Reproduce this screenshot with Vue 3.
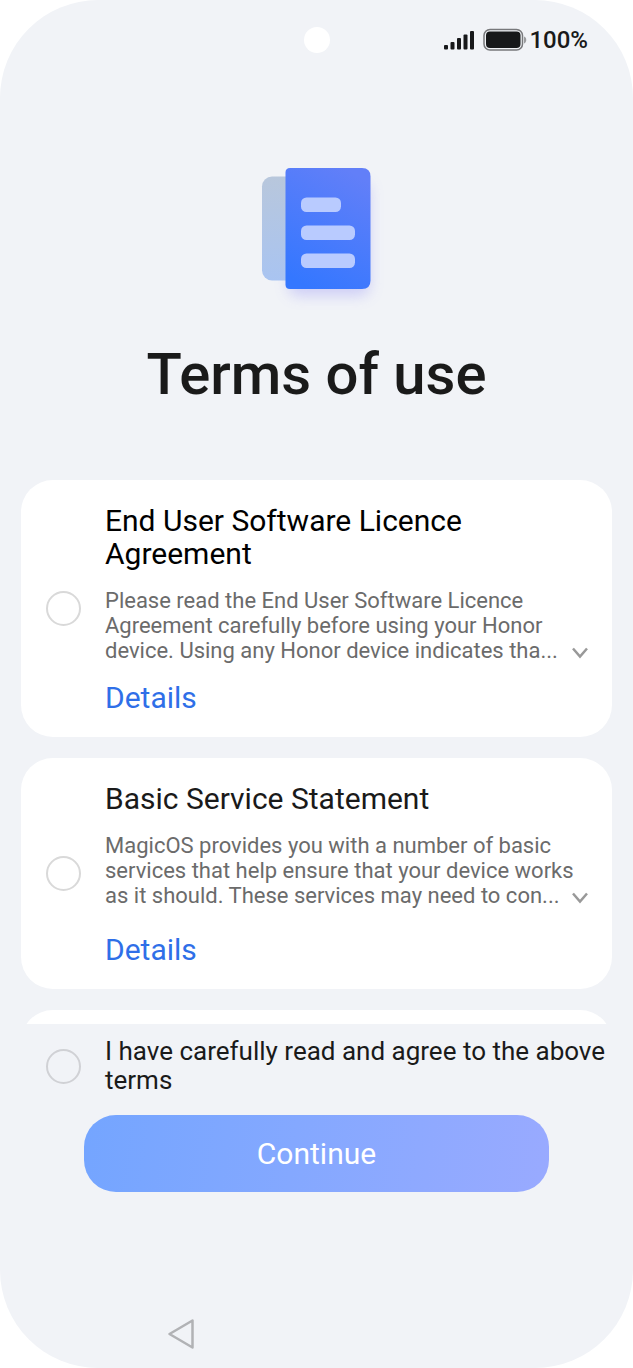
<script setup>
import { ref } from 'vue'

const agreements = ref([
  {
    id: 'licence',
    title: 'End User Software Licence Agreement',
    tone: 'strong',
    lines: [
      'Please read the End User Software Licence',
      'Agreement carefully before using your Honor',
      'device. Using any Honor device indicates tha...',
    ],
    accepted: false,
  },
  {
    id: 'service',
    title: 'Basic Service Statement',
    tone: 'normal',
    lines: [
      'MagicOS provides you with a number of basic',
      'services that help ensure that your device works',
      'as it should. These services may need to con...',
    ],
    accepted: false,
  },
])

const acceptedAll = ref(false)
</script>

<template>
  <div class="screen">
    <header class="status">
      <span class="camera"></span>
      <div class="indicators">
        <svg class="signal" width="31" height="20" viewBox="0 0 31 20" aria-label="Signal">
          <rect x="0" y="15" width="4" height="4.500" rx="1" />
          <rect x="6.500" y="12" width="4" height="7.500" rx="1" />
          <rect x="13" y="8" width="4" height="11.500" rx="1" />
          <rect x="19.500" y="4.500" width="4" height="15" rx="1" />
          <rect x="26" y="1" width="4" height="18.500" rx="1" />
        </svg>
        <svg class="battery" width="44" height="24" viewBox="0 0 44 24" aria-label="Battery">
          <rect x="1" y="1.500" width="38.500" height="20.500" rx="6" fill="none" stroke="#77787b" stroke-width="1.500" />
          <rect x="3" y="3.500" width="34.500" height="16.500" rx="4" fill="#17181a" />
          <path d="M41 8.500c3 .8 3 6 0 7z" fill="#9a9b9e" />
        </svg>
        <span class="percent">100%</span>
      </div>
    </header>

    <main class="content">
      <svg class="emblem" width="150" height="160" viewBox="2 0 150 160" aria-hidden="true">
        <defs>
          <linearGradient id="front" x1="0.700" y1="0" x2="0.300" y2="1">
            <stop offset="0" stop-color="#627ff8" />
            <stop offset="1" stop-color="#3477ff" />
          </linearGradient>
          <linearGradient id="back" x1="0" y1="0" x2="0" y2="1">
            <stop offset="0" stop-color="#b8c7dc" />
            <stop offset="1" stop-color="#a9c4f1" />
          </linearGradient>
          <filter id="glow" x="-30%" y="-30%" width="160%" height="160%">
            <feGaussianBlur stdDeviation="7" />
          </filter>
        </defs>
        <rect x="48" y="32" width="82" height="114" rx="10" fill="#8f8cf5" opacity="0.350" filter="url(#glow)" />
        <path d="M50 26.500H32a10 10 0 0 0-10 10v84a10 10 0 0 0 10 10h18z" fill="url(#back)" />
        <path d="M50 18h72q8.500 0 8.500 8.500V130.500q0 8.500-8.500 8.500H50q-4.500 0-4.500-4.500V22.500Q45.500 18 50 18z" fill="url(#front)" />
        <g fill="#b9cbff">
          <rect x="61" y="47.500" width="40" height="14.500" rx="5.500" />
          <rect x="61" y="75.500" width="54" height="14.500" rx="5.500" />
          <rect x="61" y="103.500" width="54" height="14.500" rx="5.500" />
        </g>
      </svg>
      <h1>Terms of use</h1>

      <section class="cards">
        <article v-for="item in agreements" :key="item.id" class="card">
          <input :id="item.id" v-model="item.accepted" type="checkbox" class="tick" />
          <div class="body">
            <label :for="item.id" class="title" :class="item.tone">{{ item.title }}</label>
            <div class="summary">
              <p><span v-for="line in item.lines" :key="line">{{ line }}</span></p>
              <button type="button" class="expand" aria-label="Show more">
                <svg width="16" height="12" viewBox="0 0 16 12">
                  <path d="M1 1.500L8 9.500l7-8" fill="none" stroke="#999" stroke-width="2.500" />
                </svg>
              </button>
            </div>
            <a href="#" class="details">Details</a>
          </div>
        </article>
        <div class="card"></div>
      </section>
    </main>

    <footer>
      <div class="agree">
        <input id="agree-all" v-model="acceptedAll" type="checkbox" class="tick dark" />
        <label for="agree-all">I have carefully read and agree to the above terms</label>
      </div>
      <button type="button" class="continue">Continue</button>
      <nav>
        <button type="button" class="back" aria-label="Back">
          <svg width="28" height="32" viewBox="0 0 28 32">
            <path d="M25.500 2.500v27L2.500 16z" fill="none" stroke="#b1b2b5" stroke-width="2.500" stroke-linejoin="round" />
          </svg>
        </button>
      </nav>
    </footer>
  </div>
</template>

<style>
body {
  background: #fff;
}
</style>

<style scoped>
* {
  box-sizing: border-box;
}

.screen {
  display: flex;
  flex-direction: column;
  height: 100vh;
  overflow: hidden;
  background: #f1f3f7;
  border-radius: 98px;
  color: #1a1a1a;
  font-family: Roboto, "Noto Sans", sans-serif;
}

.status {
  display: grid;
  grid-template-columns: 1fr 26px 1fr;
  align-items: center;
  flex: none;
  height: 80px;
}

.camera {
  grid-column: 2;
  height: 26px;
  border-radius: 50%;
  background: #fff;
}

.indicators {
  display: flex;
  align-items: center;
  justify-content: flex-end;
  padding-right: 45px;
}

.signal {
  margin-right: 8px;
  fill: #17181a;
}

.battery {
  margin-right: 2px;
}

.percent {
  font-size: 24px;
  font-weight: 500;
  line-height: 28px;
}

.content {
  display: flex;
  flex: 1;
  flex-direction: column;
  align-items: center;
  min-height: 0;
  padding-top: 70px;
  overflow: hidden;
}

.emblem {
  flex: none;
}

h1 {
  flex: none;
  margin: 28px 0 70px;
  font-size: 58px;
  font-weight: 500;
  line-height: 72px;
}

.cards {
  display: flex;
  flex-direction: column;
  align-self: stretch;
  gap: 21px;
  padding: 0 21px;
}

.card {
  display: flex;
  align-items: center;
  flex: none;
  gap: 24px;
  min-height: 231px;
  padding: 20px 22px 20px 25px;
  border-radius: 32px;
  background: #fff;
}

.tick {
  flex: none;
  width: 35px;
  height: 35px;
  margin: 0;
  appearance: none;
  border: 2px solid #d9d9d9;
  border-radius: 50%;
}

.tick.dark {
  border-color: #d0d1d5;
}

.tick:checked {
  border: 10px solid #2f6fe8;
}

.body {
  display: flex;
  flex: 1;
  flex-direction: column;
  align-self: stretch;
  align-items: flex-start;
  min-width: 0;
  padding-top: 4px;
}

.title {
  margin-bottom: 18px;
  font-size: 30px;
  line-height: 33px;
}

.title.strong {
  color: #000;
}

.summary {
  display: grid;
  align-self: stretch;
}

.summary > * {
  grid-area: 1 / 1;
}

p {
  margin: 0 0 16px;
  color: #6b6b6b;
  font-size: 22px;
  line-height: 25px;
}

p span {
  display: block;
  white-space: nowrap;
}

.expand {
  display: flex;
  align-self: end;
  justify-self: end;
  margin: 0 2px 20px 0;
  padding: 0;
  border: 0;
  background: none;
}

.details {
  margin-top: auto;
  color: #2f6fe8;
  font-size: 30px;
  line-height: 38px;
  text-decoration: none;
}

footer {
  flex: none;
}

.agree {
  display: flex;
  align-items: center;
  gap: 24px;
  padding: 13px 20px 20px 46px;
  font-size: 26px;
  line-height: 29px;
}

.continue {
  display: block;
  width: calc(100% - 168px);
  height: 77px;
  margin: 0 auto;
  border: 0;
  border-radius: 32px;
  background: linear-gradient(98deg, #74a5ff, #84a8ff 45%, #99aaff);
  color: #fff;
  font: inherit;
  font-size: 30px;
}

nav {
  display: flex;
  align-items: center;
  height: 68px;
  margin-top: 108px;
  padding-left: 167px;
}

.back {
  display: flex;
  padding: 0;
  border: 0;
  background: none;
}
</style>
